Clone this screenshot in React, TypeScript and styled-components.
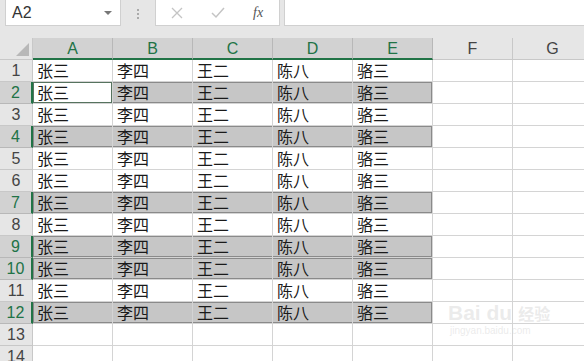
import React from 'react';
import styled, { createGlobalStyle } from 'styled-components';

const GlobalStyle = createGlobalStyle`
  html, body {
    margin: 0;
    padding: 0;
    background: #ffffff;
    overflow: hidden;
  }
`;

const Page = styled.div`
  position: relative;
  width: 584px;
  height: 361px;
  overflow: hidden;
  background: #e6e6e6;
  font-family: "Liberation Sans", Arial, sans-serif;
`;

const TopBar = styled.div`
  display: flex;
  align-items: stretch;
  height: 27px;
  background: #e6e6e6;
`;

const NameBox = styled.div`
  display: flex;
  align-items: center;
  justify-content: space-between;
  box-sizing: border-box;
  width: 116px;
  height: 26px;
  margin-left: 5px;
  padding: 0 8px 0 6px;
  background: #fff;
  border: 1px solid #d0d0d0;
  border-top: none;
  font-size: 16px;
  color: #333;
`;

const Caret = styled.span`
  width: 0;
  height: 0;
  border-left: 4px solid transparent;
  border-right: 4px solid transparent;
  border-top: 4px solid #777;
`;

const Dots = styled.div`
  display: flex;
  flex-direction: column;
  justify-content: center;
  gap: 2px;
  width: 34px;
  align-items: center;
  & span {
    width: 2px;
    height: 2px;
    background: #aaa;
  }
`;

const ButtonBox = styled.div`
  display: flex;
  align-items: center;
  box-sizing: border-box;
  width: 125px;
  height: 26px;
  background: #fff;
  border: 1px solid #d0d0d0;
  border-top: none;
  padding-left: 15px;
  gap: 28px;
`;

const FxText = styled.span`
  font-family: "Liberation Serif", "Times New Roman", serif;
  font-style: italic;
  font-size: 14px;
  color: #555;
`;

const FormulaInput = styled.div`
  flex: 1;
  box-sizing: border-box;
  height: 26px;
  margin-left: 4px;
  background: #fff;
  border: 1px solid #d0d0d0;
  border-top: none;
  border-right: none;
`;

const Band = styled.div`
  height: 11px;
  background: #e6e6e6;
`;

const Sheet = styled.div`
  display: grid;
  grid-template-columns: 33px repeat(7, 80px);
  grid-auto-rows: 22px;
  background: #fff;
`;

const Corner = styled.div`
  position: relative;
  background: #e6e6e6;
  box-sizing: border-box;
  border-right: 1px solid #c8c8c8;
  border-bottom: 1px solid #c8c8c8;
  &::after {
    content: "";
    position: absolute;
    right: 3px;
    bottom: 3px;
    width: 0;
    height: 0;
    border-left: 13px solid transparent;
    border-bottom: 13px solid #b8b8b8;
  }
`;

const ColHead = styled.div<{ $sel: boolean }>`
  box-sizing: border-box;
  display: flex;
  align-items: center;
  justify-content: center;
  background: ${p => (p.$sel ? '#d2d2d2' : '#e6e6e6')};
  color: ${p => (p.$sel ? '#217346' : '#444')};
  border-right: 1px solid ${p => (p.$sel ? '#b8b8b8' : '#c8c8c8')};
  border-bottom: ${p => (p.$sel ? '2px solid #217346' : '1px solid #c8c8c8')};
  font-size: 16px;
  padding-top: ${p => (p.$sel ? '1px' : '0')};
`;

const RowHead = styled.div<{ $sel: boolean }>`
  box-sizing: border-box;
  display: flex;
  align-items: center;
  justify-content: center;
  background: ${p => (p.$sel ? '#d2d2d2' : '#e6e6e6')};
  color: ${p => (p.$sel ? '#217346' : '#444')};
  border-right: ${p => (p.$sel ? '2px solid #217346' : '1px solid #c8c8c8')};
  border-bottom: 1px solid ${p => (p.$sel ? '#b8b8b8' : '#c8c8c8')};
  font-size: 16px;
`;

const Cell = styled.div<{ $fill: boolean; $first: boolean; $last: boolean; $active: boolean }>`
  box-sizing: border-box;
  padding-left: 4px;
  line-height: 21px;
  font-family: "Noto Sans CJK SC", "Noto Sans", sans-serif;
  font-size: 16px;
  color: #1a1a1a;
  white-space: nowrap;
  background: ${p => (p.$fill && !p.$active ? '#c6c6c6' : '#fff')};
  border-right: 1px solid #d4d4d4;
  border-bottom: 1px solid #d4d4d4;
  box-shadow: ${p => {
    if (p.$active) return 'inset 0 0 0 1px #56735f';
    if (!p.$fill) return 'none';
    const s = ['inset 0 1px 0 #8a8a8a', 'inset 0 -1px 0 #8a8a8a'];
    if (p.$first) s.push('inset 1px 0 0 #8a8a8a');
    if (p.$last) s.push('inset -1px 0 0 #8a8a8a');
    return s.join(', ');
  }};
`;

const Watermark = styled.div`
  position: absolute;
  left: 448px;
  top: 302px;
  color: rgba(215, 215, 215, 0.5);
  font-family: "Liberation Sans", Arial, sans-serif;
  line-height: 1;
  pointer-events: none;
`;

const WmBig = styled.div`
  font-size: 21px;
  font-weight: bold;
  & span {
    font-family: "Noto Sans CJK SC", sans-serif;
    font-size: 16px;
    margin-left: 6px;
  }
`;

const WmSmall = styled.div`
  font-size: 10px;
  margin-top: 3px;
  margin-left: 2px;
`;

const columns = ['A', 'B', 'C', 'D', 'E', 'F', 'G'];
const names = ['张三', '李四', '王二', '陈八', '骆三'];
const filled = [2, 4, 7, 9, 10, 12];

const App: React.FC = () => {
  const rows = Array.from({ length: 14 }, (_, i) => i + 1);

  return (
    <Page>
      <GlobalStyle />
      <TopBar>
        <NameBox>
          A2
          <Caret />
        </NameBox>
        <Dots>
          <span />
          <span />
          <span />
        </Dots>
        <ButtonBox>
          <svg width="12" height="12" viewBox="0 0 12 12">
            <path d="M1 1 L11 11 M11 1 L1 11" stroke="#c4c4c4" strokeWidth="1.3" fill="none" />
          </svg>
          <svg width="14" height="12" viewBox="0 0 14 12">
            <path d="M1 6 L5 10 L13 1" stroke="#c4c4c4" strokeWidth="1.5" fill="none" />
          </svg>
          <FxText>fx</FxText>
        </ButtonBox>
        <FormulaInput />
      </TopBar>
      <Band />
      <Sheet>
        <Corner />
        {columns.map((c, i) => (
          <ColHead key={c} $sel={i < 5}>
            {c}
          </ColHead>
        ))}
        {rows.map(r => {
          const fill = filled.includes(r);
          return (
            <React.Fragment key={r}>
              <RowHead $sel={fill}>{r}</RowHead>
              {columns.map((c, ci) => (
                <Cell
                  key={c}
                  $fill={fill && ci < 5}
                  $first={ci === 0}
                  $last={ci === 4}
                  $active={r === 2 && ci === 0}
                >
                  {r <= 12 && ci < 5 ? names[ci] : ''}
                </Cell>
              ))}
            </React.Fragment>
          );
        })}
      </Sheet>
      <Watermark>
        <WmBig>
          Bai du<span>经验</span>
        </WmBig>
        <WmSmall>jingyan.baidu.com</WmSmall>
      </Watermark>
    </Page>
  );
};

export default App;
